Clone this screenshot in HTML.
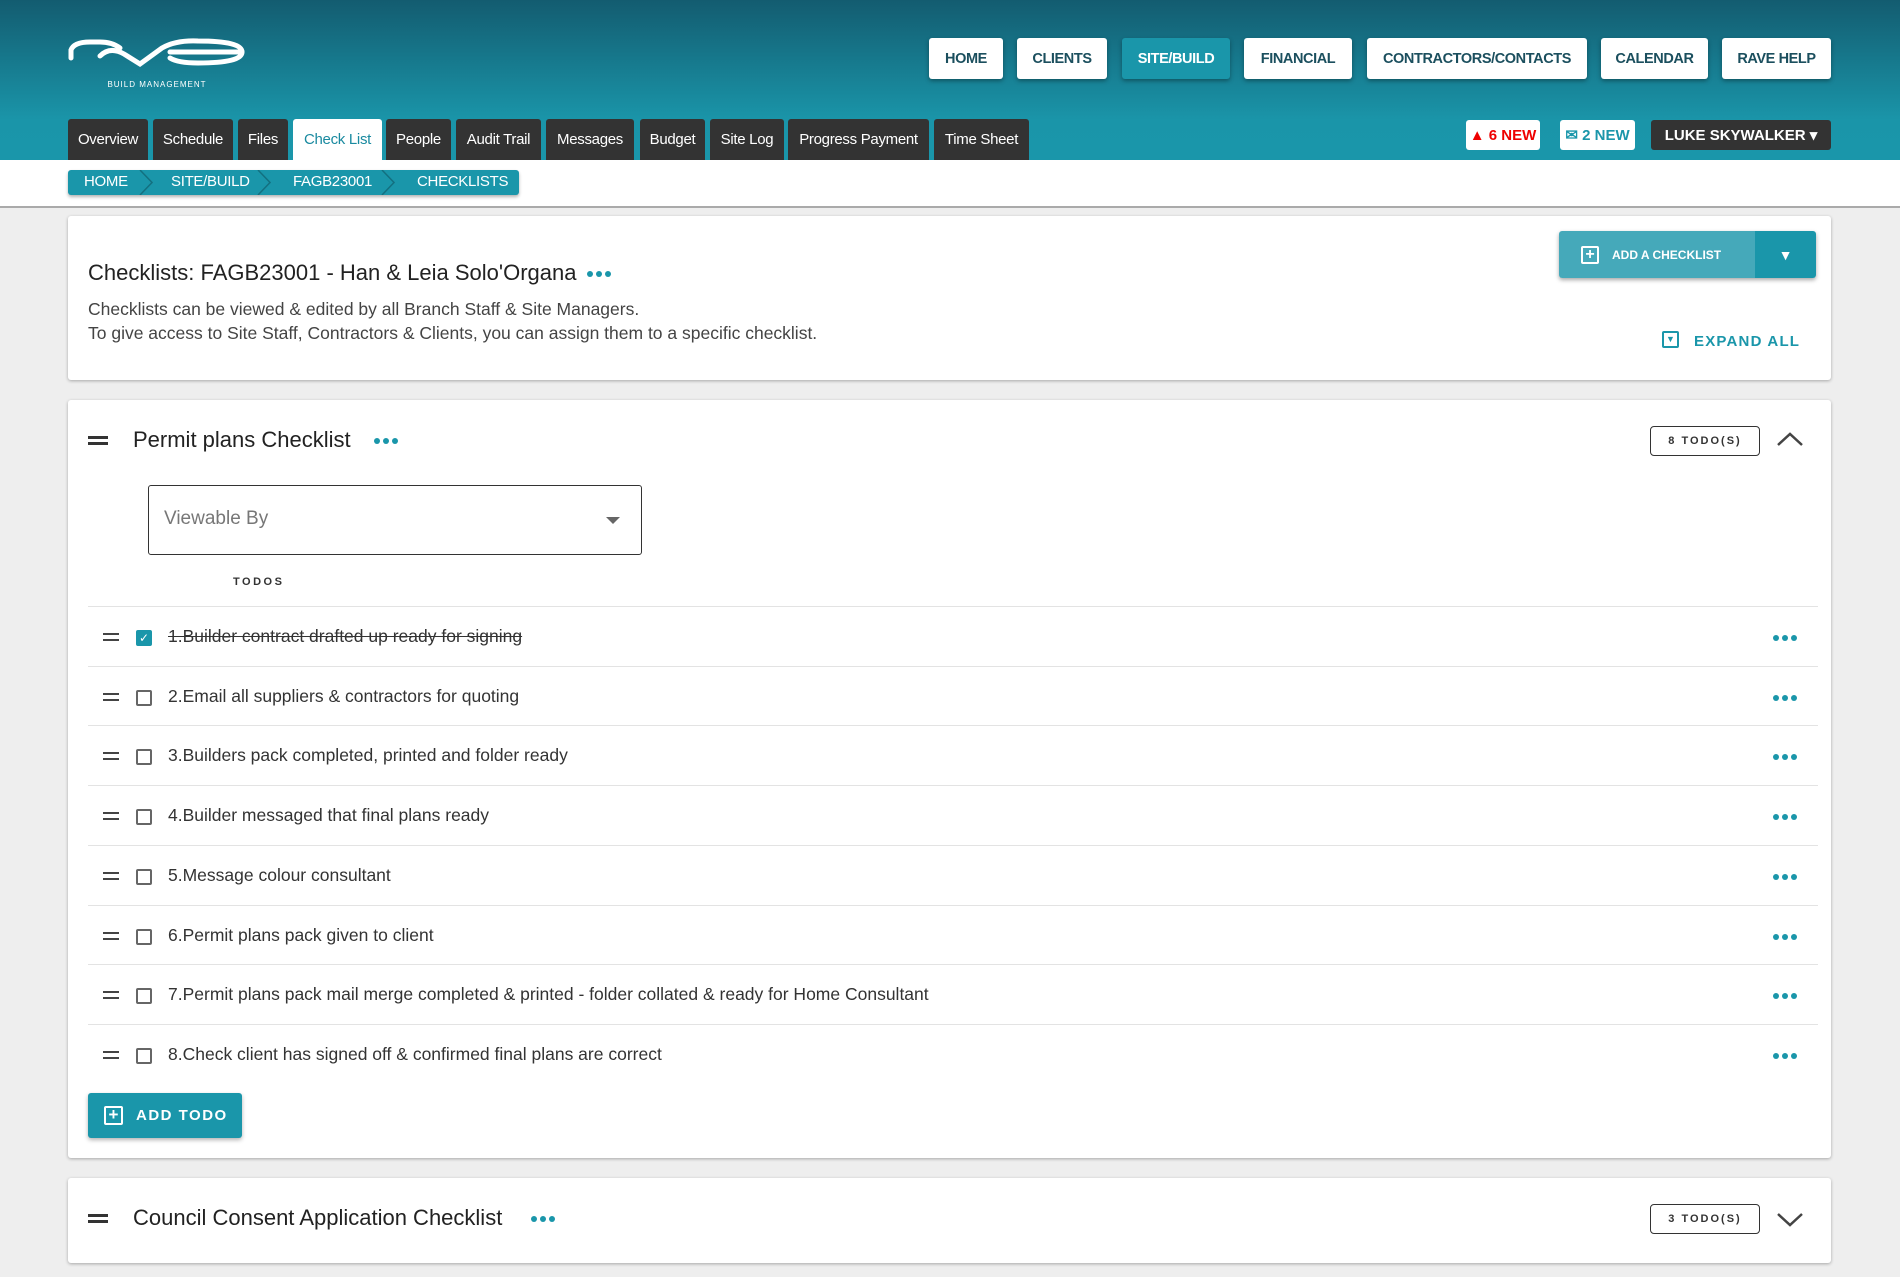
<!DOCTYPE html>
<html><head><meta charset="utf-8"><style>
*{box-sizing:border-box;margin:0;padding:0}
body{width:1900px;height:1277px;background:#eeeeee;font-family:"Liberation Sans",sans-serif;position:relative;overflow:hidden;color:#333}
.abs{position:absolute}
#hdr{left:0;top:0;width:1900px;height:160px;background:linear-gradient(#135c70,#1a95a9 75%,#1a96aa)}
.nb{position:absolute;top:38px;height:41px;background:#fff;border-radius:3px;box-shadow:0 2px 4px rgba(0,0,0,.35);font-weight:bold;font-size:14.5px;color:#1b4f5e;display:flex;align-items:center;justify-content:center;letter-spacing:-.4px}
.nb.act{background:#1a96aa;color:#fff}
.tab{position:absolute;top:119px;height:41px;background:#333;color:#fff;font-size:15px;display:flex;align-items:center;justify-content:center;border-radius:3px 3px 0 0;letter-spacing:-.3px}
.tab.act{background:#fff;color:#1a8aa0}
.card{position:absolute;left:68px;width:1763px;background:#fff;border-radius:3px;box-shadow:0 1px 3px rgba(0,0,0,.3)}
.row{position:absolute;left:20px;width:1730px;height:60px;border-top:1px solid #e3e3e3}
.drag{position:absolute;left:15px;top:26px;width:16px;height:8px;border-top:2.5px solid #444;border-bottom:2.5px solid #444}
.cb{position:absolute;left:48px;top:23px;width:16px;height:16px;border:2px solid #666;border-radius:2px}
.rt{position:absolute;left:80px;top:19px;font-size:17.5px;color:#333}
.dots{position:absolute;display:flex;gap:3px}
.dots i{width:6px;height:6px;border-radius:50%;background:#1a96aa;display:block}
.todo{position:absolute;left:1582px;width:110px;height:30px;border:1.5px solid #333;border-radius:4px;font-size:11px;font-weight:bold;letter-spacing:2px;display:flex;align-items:center;justify-content:center}
</style></head><body>
<div id="hdr" class="abs"></div>
<svg class="abs" style="left:66px;top:34px" width="182" height="56" viewBox="0 0 182 56">
<g fill="none" stroke="#fff" stroke-width="5" stroke-linecap="round">
<path d="M5 24 V16 Q8 8 24 8 H34 Q46 8 54 14"/>
<path d="M34 22 Q44 12 58 20 L74 30 L96 14 Q110 6 132 7 Q176 7 176 18 Q176 29 132 29 Q112 29 104 24"/>
<path d="M104 18 H176"/>
</g>
<text x="91" y="53" text-anchor="middle" fill="#fff" font-size="8" font-family="Liberation Sans" letter-spacing="1">BUILD MANAGEMENT</text>
</svg>
<div class="nb" style="left:929px;width:74px">HOME</div>
<div class="nb" style="left:1017px;width:90px">CLIENTS</div>
<div class="nb act" style="left:1122px;width:108px">SITE/BUILD</div>
<div class="nb" style="left:1244px;width:108px">FINANCIAL</div>
<div class="nb" style="left:1367px;width:220px">CONTRACTORS/CONTACTS</div>
<div class="nb" style="left:1601px;width:107px">CALENDAR</div>
<div class="nb" style="left:1722px;width:109px">RAVE HELP</div>

<div class="tab" style="left:68px;width:80px">Overview</div>
<div class="tab" style="left:153px;width:80px">Schedule</div>
<div class="tab" style="left:238px;width:50px">Files</div>
<div class="tab act" style="left:293px;width:89px">Check List</div>
<div class="tab" style="left:386px;width:65px">People</div>
<div class="tab" style="left:456px;width:85px">Audit Trail</div>
<div class="tab" style="left:546px;width:88px">Messages</div>
<div class="tab" style="left:640px;width:65px">Budget</div>
<div class="tab" style="left:710px;width:74px">Site Log</div>
<div class="tab" style="left:788px;width:141px">Progress Payment</div>
<div class="tab" style="left:934px;width:95px">Time Sheet</div>

<div class="abs" style="left:1466px;top:120px;width:74px;height:30px;background:#fff;border-radius:3px;color:#e00;font-weight:bold;font-size:15px;display:flex;align-items:center;justify-content:center">▲&nbsp;6 NEW</div>
<div class="abs" style="left:1560px;top:120px;width:75px;height:30px;background:#fff;border-radius:3px;color:#1a96aa;font-weight:bold;font-size:15px;display:flex;align-items:center;justify-content:center">✉&nbsp;2 NEW</div>
<div class="abs" style="left:1651px;top:120px;width:180px;height:30px;background:#333;border-radius:3px;color:#fff;font-weight:bold;font-size:15px;display:flex;align-items:center;justify-content:center">LUKE SKYWALKER&nbsp;▾</div>

<div class="abs" style="left:0;top:160px;width:1900px;height:48px;background:#fff;border-bottom:2px solid #aaa"></div>
<div class="abs" style="left:68px;top:170px;width:451px;height:25px;background:#1a96aa;border-radius:3px;box-shadow:0 2px 3px rgba(0,0,0,.3);color:#fff;font-size:15px;letter-spacing:-.3px">
<span class="abs" style="left:16px;top:3px">HOME</span>
<span class="abs" style="left:103px;top:3px">SITE/BUILD</span>
<span class="abs" style="left:225px;top:3px">FAGB23001</span>
<span class="abs" style="left:349px;top:3px">CHECKLISTS</span>
<svg class="abs" style="left:0;top:0" width="451" height="25"><g fill="none" stroke="#137080" stroke-width="1.5"><path d="M72 0 L84 12.5 L72 25"/><path d="M190 0 L202 12.5 L190 25"/><path d="M314 0 L326 12.5 L314 25"/></g></svg>
</div>

<div class="card" style="top:216px;height:164px">
<div class="abs" style="left:20px;top:44px;font-size:22px;color:#222">Checklists: FAGB23001 - Han &amp; Leia Solo'Organa</div>
<div class="dots" style="left:519px;top:55px"><i></i><i></i><i></i></div>
<div class="abs" style="left:20px;top:81px;font-size:17.5px;color:#444;line-height:24px">Checklists can be viewed &amp; edited by all Branch Staff &amp; Site Managers.<br>To give access to Site Staff, Contractors &amp; Clients, you can assign them to a specific checklist.</div>
<div class="abs" style="left:1491px;top:15px;width:257px;height:47px;border-radius:3px;box-shadow:0 2px 4px rgba(0,0,0,.35);overflow:hidden;display:flex">
<div style="width:196px;background:#45a9ba;color:#fff;font-size:12px;font-weight:bold;display:flex;align-items:center;padding-left:22px"><span style="display:inline-block;width:18px;height:18px;border:2px solid #fff;border-radius:2px;text-align:center;line-height:13px;font-size:16px;margin-right:13px">+</span>ADD A CHECKLIST</div>
<div style="flex:1;background:#1a96aa;color:#fff;display:flex;align-items:center;justify-content:center;font-size:14px">▼</div>
</div>
<div class="abs" style="left:1594px;top:115px;width:17px;height:17px;border:2px solid #1a96aa;border-radius:2px;color:#1a96aa;font-size:9px;text-align:center;line-height:13px">▼</div>
<div class="abs" style="left:1626px;top:117px;color:#1a96aa;font-size:15px;font-weight:bold;letter-spacing:1.2px">EXPAND ALL</div>
</div>

<div class="card" style="top:400px;height:758px">
<div class="abs" style="left:20px;top:36px;width:20px;height:9px;border-top:3px solid #333;border-bottom:3px solid #333"></div>
<div class="abs" style="left:65px;top:27px;font-size:22px;color:#222">Permit plans Checklist</div>
<div class="dots" style="left:306px;top:38px"><i></i><i></i><i></i></div>
<div class="todo" style="top:26px">8 TODO(S)</div>
<svg class="abs" style="left:1707px;top:30px" width="30" height="18"><path d="M3 15 L15 4 L27 15" fill="none" stroke="#444" stroke-width="2.5"/></svg>
<div class="abs" style="left:80px;top:85px;width:494px;height:70px;border:1.5px solid #333;border-radius:3px">
<span class="abs" style="left:15px;top:22px;font-size:19px;color:#777">Viewable By</span>
<span class="abs" style="left:457px;top:31px;width:0;height:0;border-left:7px solid transparent;border-right:7px solid transparent;border-top:7px solid #666"></span>
</div>
<div class="abs" style="left:165px;top:176px;font-size:11px;font-weight:bold;letter-spacing:2.5px;color:#333">TODOS</div>

<div class="row" style="top:206px"><div class="drag"></div><div class="cb" style="background:#1a96aa;border-color:#1a96aa;color:#fff;font-size:12px;line-height:12px;text-align:center">✓</div><div class="rt" style="text-decoration:line-through">1.Builder contract drafted up ready for signing</div><div class="dots" style="left:1685px;top:28px"><i></i><i></i><i></i></div></div>
<div class="row" style="top:266px"><div class="drag"></div><div class="cb"></div><div class="rt">2.Email all suppliers &amp; contractors for quoting</div><div class="dots" style="left:1685px;top:28px"><i></i><i></i><i></i></div></div>
<div class="row" style="top:325px"><div class="drag"></div><div class="cb"></div><div class="rt">3.Builders pack completed, printed and folder ready</div><div class="dots" style="left:1685px;top:28px"><i></i><i></i><i></i></div></div>
<div class="row" style="top:385px"><div class="drag"></div><div class="cb"></div><div class="rt">4.Builder messaged that final plans ready</div><div class="dots" style="left:1685px;top:28px"><i></i><i></i><i></i></div></div>
<div class="row" style="top:445px"><div class="drag"></div><div class="cb"></div><div class="rt">5.Message colour consultant</div><div class="dots" style="left:1685px;top:28px"><i></i><i></i><i></i></div></div>
<div class="row" style="top:505px"><div class="drag"></div><div class="cb"></div><div class="rt">6.Permit plans pack given to client</div><div class="dots" style="left:1685px;top:28px"><i></i><i></i><i></i></div></div>
<div class="row" style="top:564px"><div class="drag"></div><div class="cb"></div><div class="rt">7.Permit plans pack mail merge completed &amp; printed - folder collated &amp; ready for Home Consultant</div><div class="dots" style="left:1685px;top:28px"><i></i><i></i><i></i></div></div>
<div class="row" style="top:624px"><div class="drag"></div><div class="cb"></div><div class="rt">8.Check client has signed off &amp; confirmed final plans are correct</div><div class="dots" style="left:1685px;top:28px"><i></i><i></i><i></i></div></div>

<div class="abs" style="left:20px;top:693px;width:154px;height:45px;background:#1a96aa;border-radius:3px;box-shadow:0 2px 4px rgba(0,0,0,.3);color:#fff;font-size:15px;font-weight:bold;letter-spacing:1.5px;display:flex;align-items:center;padding-left:16px"><span style="display:inline-block;width:19px;height:19px;border:2px solid #fff;border-radius:2px;text-align:center;line-height:14px;font-size:17px;margin-right:13px;letter-spacing:0">+</span>ADD TODO</div>
</div>

<div class="card" style="top:1178px;height:85px">
<div class="abs" style="left:20px;top:36px;width:20px;height:9px;border-top:3px solid #333;border-bottom:3px solid #333"></div>
<div class="abs" style="left:65px;top:27px;font-size:22px;color:#222">Council Consent Application Checklist</div>
<div class="dots" style="left:463px;top:38px"><i></i><i></i><i></i></div>
<div class="todo" style="top:26px">3 TODO(S)</div>
<svg class="abs" style="left:1707px;top:32px" width="30" height="18"><path d="M3 4 L15 15 L27 4" fill="none" stroke="#444" stroke-width="2.5"/></svg>
</div>
</body></html>
